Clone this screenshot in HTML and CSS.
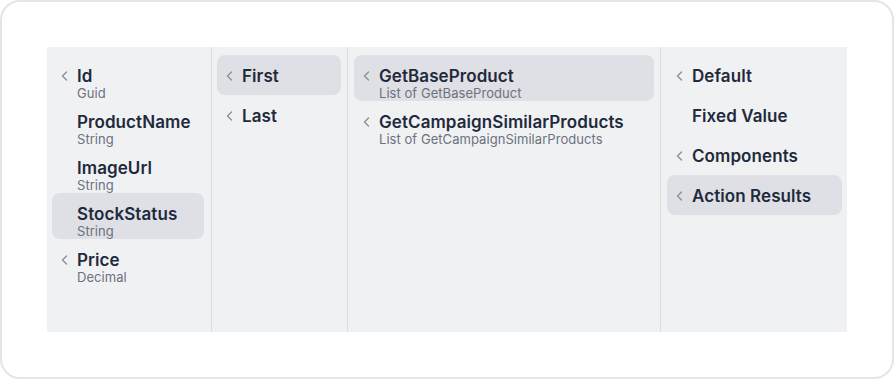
FILE: index.html
```html
<!DOCTYPE html>
<html>
<head>
    <title>Field Picker</title>
    <link rel="stylesheet" href="styles.css">
</head>
<body>
    <div class="card">
        <div class="picker">
            <!-- Fields -->
            <div class="column col-fields">
                <div class="item two-line">
                    <span class="chev"><svg width="7" height="10" viewBox="0 0 7 10"><polyline points="5.5,1 1.5,5 5.5,9"/></svg></span>
                    <div class="label">
                        <div class="title">Id</div>
                        <div class="sub">Guid</div>
                    </div>
                </div>
                <div class="item two-line">
                    <span class="chev"></span>
                    <div class="label">
                        <div class="title">ProductName</div>
                        <div class="sub">String</div>
                    </div>
                </div>
                <div class="item two-line">
                    <span class="chev"></span>
                    <div class="label">
                        <div class="title">ImageUrl</div>
                        <div class="sub">String</div>
                    </div>
                </div>
                <div class="item two-line active">
                    <span class="chev"></span>
                    <div class="label">
                        <div class="title">StockStatus</div>
                        <div class="sub">String</div>
                    </div>
                </div>
                <div class="item two-line">
                    <span class="chev"><svg width="7" height="10" viewBox="0 0 7 10"><polyline points="5.5,1 1.5,5 5.5,9"/></svg></span>
                    <div class="label">
                        <div class="title">Price</div>
                        <div class="sub">Decimal</div>
                    </div>
                </div>
            </div>

            <!-- Selector -->
            <div class="column col-select">
                <div class="item active">
                    <span class="chev"><svg width="7" height="10" viewBox="0 0 7 10"><polyline points="5.5,1 1.5,5 5.5,9"/></svg></span>
                    <div class="label"><div class="title">First</div></div>
                </div>
                <div class="item">
                    <span class="chev"><svg width="7" height="10" viewBox="0 0 7 10"><polyline points="5.5,1 1.5,5 5.5,9"/></svg></span>
                    <div class="label"><div class="title">Last</div></div>
                </div>
            </div>

            <!-- Actions -->
            <div class="column col-actions">
                <div class="item two-line active">
                    <span class="chev"><svg width="7" height="10" viewBox="0 0 7 10"><polyline points="5.5,1 1.5,5 5.5,9"/></svg></span>
                    <div class="label">
                        <div class="title">GetBaseProduct</div>
                        <div class="sub">List of GetBaseProduct</div>
                    </div>
                </div>
                <div class="item two-line">
                    <span class="chev"><svg width="7" height="10" viewBox="0 0 7 10"><polyline points="5.5,1 1.5,5 5.5,9"/></svg></span>
                    <div class="label">
                        <div class="title">GetCampaignSimilarProducts</div>
                        <div class="sub">List of GetCampaignSimilarProducts</div>
                    </div>
                </div>
            </div>

            <!-- Sources -->
            <div class="column col-sources">
                <div class="item">
                    <span class="chev"><svg width="7" height="10" viewBox="0 0 7 10"><polyline points="5.5,1 1.5,5 5.5,9"/></svg></span>
                    <div class="label"><div class="title">Default</div></div>
                </div>
                <div class="item">
                    <span class="chev"></span>
                    <div class="label"><div class="title">Fixed Value</div></div>
                </div>
                <div class="item">
                    <span class="chev"><svg width="7" height="10" viewBox="0 0 7 10"><polyline points="5.5,1 1.5,5 5.5,9"/></svg></span>
                    <div class="label"><div class="title">Components</div></div>
                </div>
                <div class="item active">
                    <span class="chev"><svg width="7" height="10" viewBox="0 0 7 10"><polyline points="5.5,1 1.5,5 5.5,9"/></svg></span>
                    <div class="label"><div class="title">Action Results</div></div>
                </div>
            </div>
        </div>
    </div>
</body>
</html>
```

FILE: styles.css
```css
html, body {
    margin: 0;
    padding: 0;
    background-color: white;
}
body {
    font-family: Inter, "Noto Sans", sans-serif;
}
.card {
    box-sizing: border-box;
    width: 894px;
    height: 379px;
    border: 2px solid #e3e5e9;
    border-radius: 20px;
    padding: 45px;
    background-color: white;
}
.picker {
    display: flex;
    width: 800px;
    height: 285px;
    background-color: #f0f1f3;
}
.column {
    box-sizing: border-box;
    padding: 8px 6px;
    border-right: 1px solid #dcdee2;
    display: flex;
    flex-direction: column;
}
.column:last-child {
    border-right: none;
}
.col-fields {
    width: 165px;
    padding-left: 5px;
    padding-right: 7px;
}
.col-select {
    width: 136px;
    padding-left: 5px;
}
.col-actions {
    width: 313px;
}
.col-sources {
    width: 186px;
    padding-right: 5px;
}
.item {
    display: flex;
    align-items: flex-start;
    padding: 11px 9px 9px;
    border-radius: 8px;
}
.item.two-line {
    padding-bottom: 1px;
}
.item.active {
    background-color: #dfe0e5;
}
.chev {
    width: 16px;
    height: 20px;
    flex-shrink: 0;
    display: flex;
    align-items: center;
}
.chev svg {
    fill: none;
    stroke: #8b9099;
    stroke-width: 1.4;
    stroke-linecap: round;
    stroke-linejoin: round;
}
.title {
    font-size: 17px;
    line-height: 20px;
    font-weight: 600;
    letter-spacing: 0.08px;
    color: #1f2a3c;
}
.sub {
    font-size: 13px;
    line-height: 14px;
    letter-spacing: 0.05px;
    color: #6b7280;
}
```
